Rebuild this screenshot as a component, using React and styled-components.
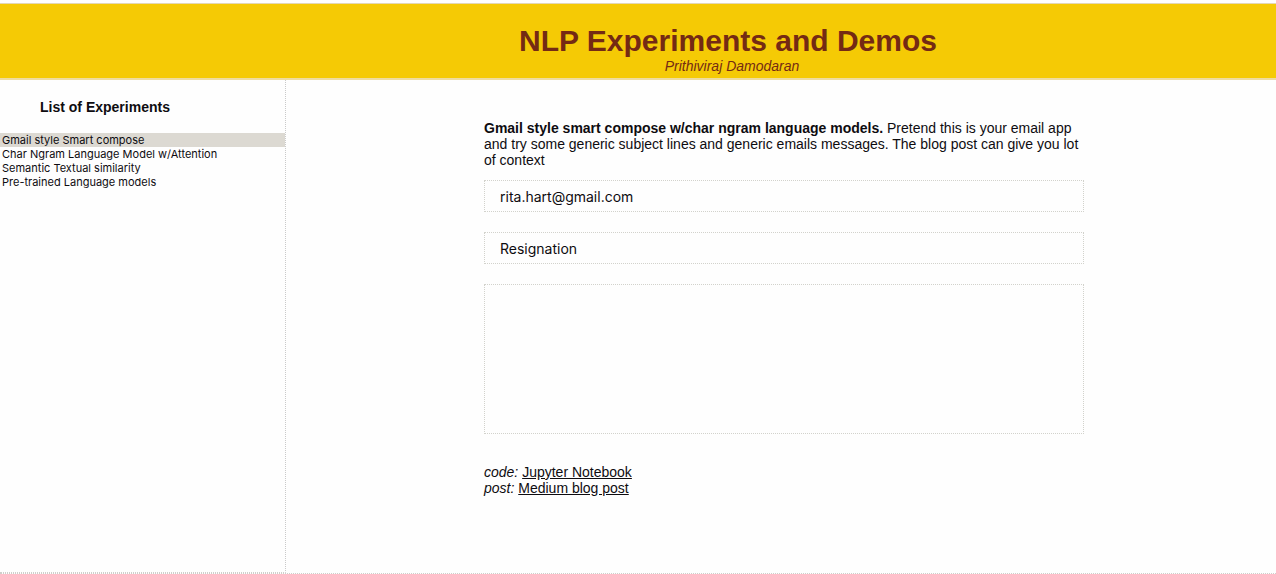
import React, { useState } from "react";
import styled, { createGlobalStyle } from "styled-components";

const GlobalStyle = createGlobalStyle`
  * { box-sizing: border-box; }
  body {
    margin: 0;
    background: #fefefe;
    color: #0e0c10;
    font: 14px/16px "Liberation Sans", Arial, sans-serif;
  }
`;

const Page = styled.div`
  display: flex;
  flex-direction: column;
  min-height: 100vh;
  padding-top: 3px;
  border-bottom: 1px dotted #cfcfcb;
`;

const Header = styled.header`
  padding: 20px 0 4px 180px;
  border-top: 1px solid #e3d7b4;
  border-bottom: 2px solid #eedca0;
  background: #f5ca05;
  color: #742a14;
  text-align: center;
`;

const Title = styled.h1`
  margin: 0;
  font-size: 30px;
  line-height: 34px;
`;

const Author = styled.p`
  margin: 0;
  padding-left: 8px;
  font-style: italic;
`;

const Body = styled.div`
  display: flex;
  flex: 1;
`;

const Sidebar = styled.nav`
  flex: 0 0 286px;
  border-right: 1px dotted #cacaca;
  border-bottom: 1px dotted #cfcfcb;
`;

const SidebarTitle = styled.h2`
  margin: 0;
  padding: 19px 40px 18px;
  font-size: 14px;
  line-height: 16px;
`;

const ExperimentList = styled.ul`
  margin: 0;
  padding: 0;
  list-style: none;
`;

const ExperimentLink = styled.a`
  display: block;
  padding-left: 2px;
  background: ${({ $active }) => ($active ? "#dcd9d2" : "transparent")};
  color: inherit;
  font: 11px/14px Inter, sans-serif;
  text-decoration: none;
`;

const Main = styled.main`
  flex: 1;
  padding: 40px 0 40px 6px;
`;

const Demo = styled.form`
  display: flex;
  flex-direction: column;
  gap: 20px;
  width: 100%;
  max-width: 600px;
  margin: 0 auto;
`;

const Intro = styled.p`
  margin: 0 0 -8px;
`;

const Field = styled.input`
  height: 32px;
  padding: 0 15px;
  border: 1px dotted #d2d2cc;
  border-radius: 0;
  background: transparent;
  color: inherit;
  font: 14px Inter, sans-serif;
  outline: none;
`;

const MessageField = styled(Field)`
  height: 150px;
  padding: 8px 15px;
  resize: none;
`;

const Resources = styled.div`
  margin-top: 10px;
`;

const ResourceLink = styled.a`
  color: inherit;
`;

const experiments = [
  "Gmail style Smart compose",
  "Char Ngram Language Model w/Attention",
  "Semantic Textual similarity",
  "Pre-trained Language models",
];

export default function App() {
  const [active, setActive] = useState(0);

  return (
    <Page>
      <GlobalStyle />
      <Header>
        <Title>NLP Experiments and Demos</Title>
        <Author>Prithiviraj Damodaran</Author>
      </Header>
      <Body>
        <Sidebar aria-label="Experiments">
          <SidebarTitle>List of Experiments</SidebarTitle>
          <ExperimentList>
            {experiments.map((name, i) => (
              <li key={name}>
                <ExperimentLink href="#" $active={i === active} onClick={() => setActive(i)}>
                  {name}
                </ExperimentLink>
              </li>
            ))}
          </ExperimentList>
        </Sidebar>
        <Main>
          <Demo>
            <Intro>
              <strong>Gmail style smart compose w/char ngram language models.</strong>{" "}
              Pretend this is your email app and try some generic subject lines and generic
              emails messages. The blog post can give you lot of context
            </Intro>
            <Field type="email" aria-label="To" defaultValue="rita.hart@gmail.com" />
            <Field type="text" aria-label="Subject" defaultValue="Resignation" />
            <MessageField as="textarea" aria-label="Message" />
            <Resources>
              <div>
                <em>code:</em> <ResourceLink href="#">Jupyter Notebook</ResourceLink>
              </div>
              <div>
                <em>post:</em> <ResourceLink href="#">Medium blog post</ResourceLink>
              </div>
            </Resources>
          </Demo>
        </Main>
      </Body>
    </Page>
  );
}
